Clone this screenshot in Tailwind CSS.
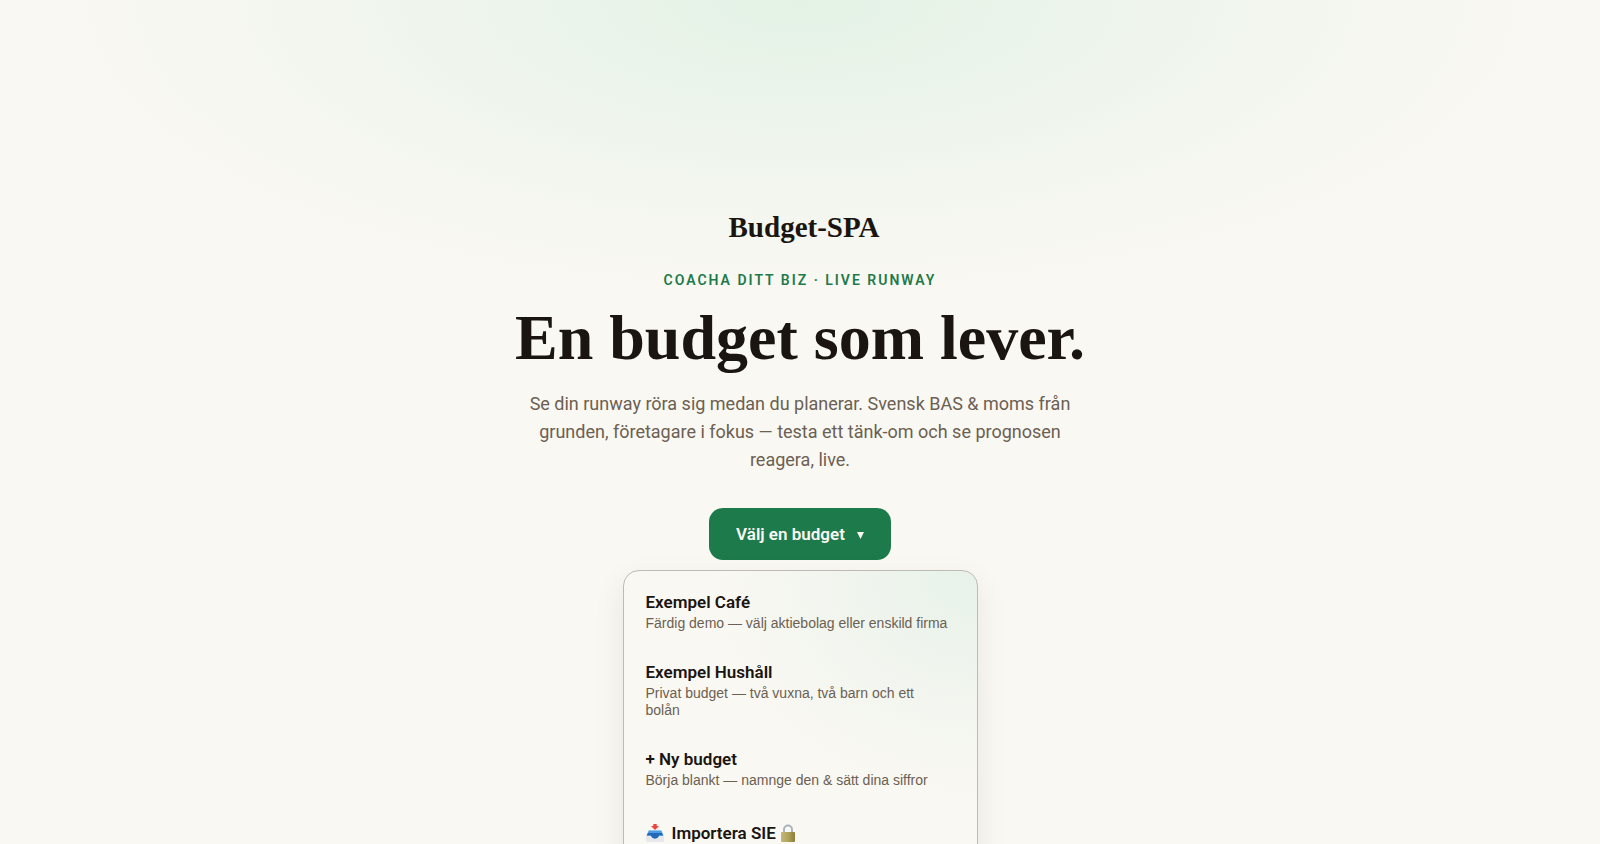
<!DOCTYPE html>
<html lang="sv">
<head>
  <meta charset="UTF-8" />
  <meta name="viewport" content="width=device-width, initial-scale=1.0"/>
  <title>Budget-SPA</title>
  <script src="https://cdn.jsdelivr.net/npm/@tailwindcss/browser@4"></script>
</head>
<body class="bg-[#faf8f3] text-[#1a1510] font-[Roboto,sans-serif]">

  <main class="min-h-screen flex flex-col items-center px-4 pt-[209px] bg-[radial-gradient(750px_300px_at_50%_0,#e4f2e6,#faf8f300)]">

    <!-- Hero -->
    <div class="pl-2 font-['Liberation_Serif',serif] text-[29px] leading-9 font-bold">Budget-SPA</div>
    <p class="mt-[25px] text-sm font-semibold tracking-[2px] uppercase text-[#1d7a4b]">Coacha ditt biz · Live runway</p>
    <h1 class="mt-3 font-['Liberation_Serif',serif] text-[64px] leading-[72px] font-bold text-center">En budget som lever.</h1>
    <p class="mt-4 max-w-[560px] text-lg leading-7 text-center text-[#6b6052]">
      Se din runway röra sig medan du planerar. Svensk BAS &amp; moms från grunden, företagare i fokus — testa ett tänk-om och se prognosen reagera, live.
    </p>

    <!-- Budget picker -->
    <button id="pickerButton" type="button" aria-expanded="true" aria-controls="pickerMenu" onclick="toggleMenu()"
            class="mt-[34px] h-[52px] px-[27px] pt-[2px] flex items-center gap-3 rounded-[14px] bg-[#1d7a4b] hover:bg-[#17683f] text-[#faf8f3] text-[17px] font-semibold cursor-pointer">
      Välj en budget
      <svg class="w-[7px] h-[7px]" viewBox="0 0 7 7" fill="currentColor" aria-hidden="true"><path d="M0 0h7L3.500 7z"/></svg>
    </button>

    <div id="pickerMenu"
         class="mt-[10px] w-full max-w-[355px] p-[6px] flex flex-col rounded-2xl border border-[#bfbbb3] bg-[#faf8f3] bg-[radial-gradient(270px_230px_at_100%_0,#e7f2e9,#faf8f300)] shadow-[0_12px_32px_rgba(26,21,16,0.08)]">
      <button type="button" class="flex flex-col gap-[3px] px-4 py-[15px] text-left rounded-xl hover:bg-black/5 cursor-pointer">
        <span class="text-[17px] leading-5 font-semibold">Exempel Café</span>
        <span class="font-['Liberation_Sans',sans-serif] text-sm leading-[17px] text-[#6b6052]">Färdig demo — välj aktiebolag eller enskild firma</span>
      </button>
      <button type="button" class="flex flex-col gap-[3px] px-4 py-[15px] text-left rounded-xl hover:bg-black/5 cursor-pointer">
        <span class="text-[17px] leading-5 font-semibold">Exempel Hushåll</span>
        <span class="font-['Liberation_Sans',sans-serif] text-sm leading-[17px] text-[#6b6052]">Privat budget — två vuxna, två barn och ett<br>bolån</span>
      </button>
      <button type="button" class="flex flex-col gap-[3px] px-4 py-[15px] text-left rounded-xl hover:bg-black/5 cursor-pointer">
        <span class="text-[17px] leading-5 font-semibold">+ Ny budget</span>
        <span class="font-['Liberation_Sans',sans-serif] text-sm leading-[17px] text-[#6b6052]">Börja blankt — namnge den &amp; sätt dina siffror</span>
      </button>
      <button type="button" class="flex items-center px-4 py-[15px] text-left rounded-xl hover:bg-black/5 cursor-pointer">
        <!-- Inbox tray -->
        <svg class="w-[18px] h-[18px] mr-2" viewBox="0 0 18 18" aria-hidden="true">
          <path d="M2.500 6h13L18 11v5.500q0 1.500-1.500 1.500h-15Q0 18 0 16.500V11z" fill="#e6e8eb"/>
          <path d="M2.800 6.500h12.400l2 5H13q-1 3-4 3t-4-3H.8z" fill="#4a9be6"/>
          <path d="M2 9h14l1.200 2.500H13q-1 3-4 3t-4-3H.8z" fill="#2468b8"/>
          <path d="M7.300 0h3.400v2H13L9 6 5 2h2.300z" fill="#f0423c"/>
        </svg>
        <span class="text-[17px] leading-7 font-semibold">Importera SIE</span>
        <!-- Padlock -->
        <svg class="w-[14px] h-[18px] ml-[5px]" viewBox="0 0 14 18" aria-hidden="true">
          <defs>
            <linearGradient id="brass" x1="0" x2="1">
              <stop offset="0" stop-color="#c3b878"/>
              <stop offset=".5" stop-color="#b0a35c"/>
              <stop offset="1" stop-color="#8c8038"/>
            </linearGradient>
          </defs>
          <path d="M3 9V5.500a4 4 0 0 1 8 0V9" fill="none" stroke="#a9b4bb" stroke-width="2"/>
          <rect y="8" width="14" height="10" rx="1" fill="url(#brass)"/>
        </svg>
      </button>
    </div>
  </main>

  <script>
    function toggleMenu() {
      const menu = document.getElementById("pickerMenu");
      const isHidden = menu.classList.toggle("invisible");
      document.getElementById("pickerButton").setAttribute("aria-expanded", String(!isHidden));
    }
  </script>
</body>
</html>
